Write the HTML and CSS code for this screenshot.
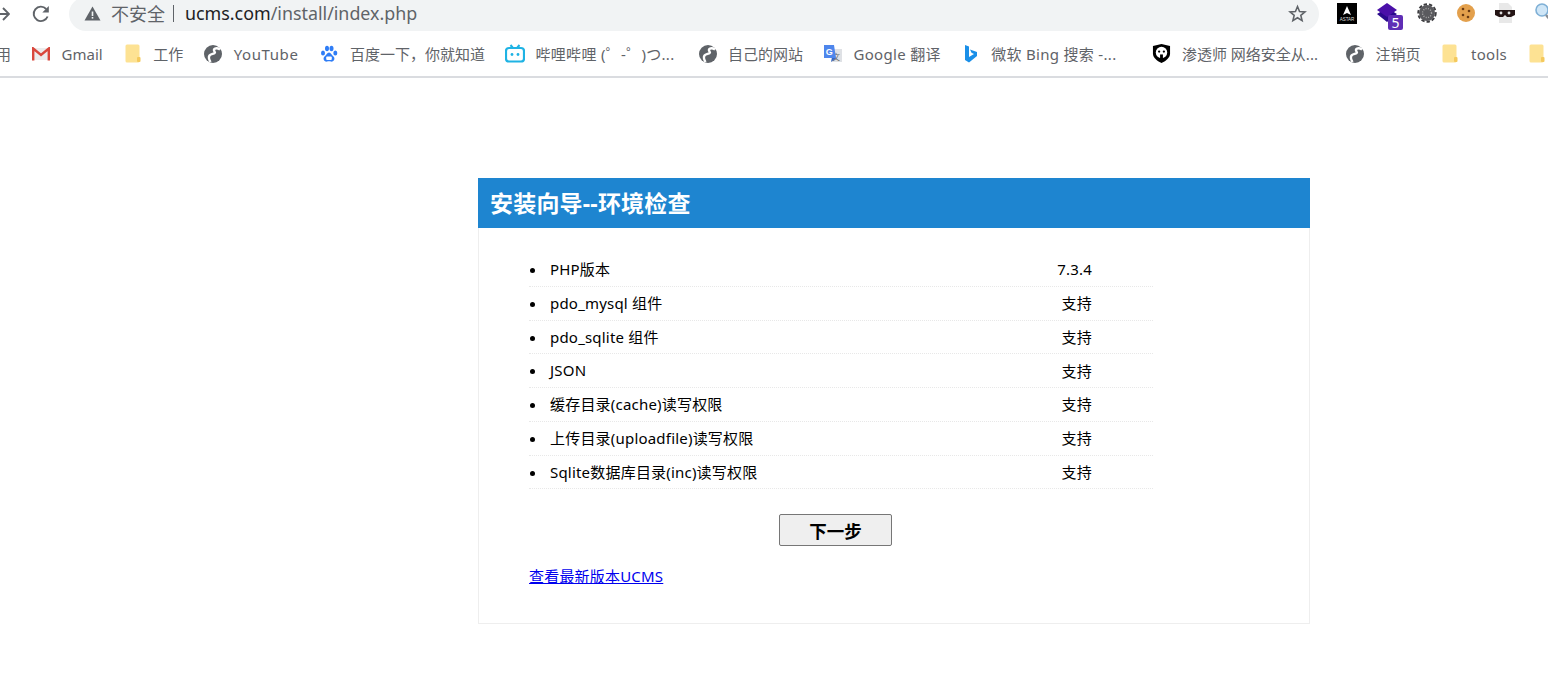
FILE: index.html
```html
<!DOCTYPE html>
<html lang="zh-CN">
<head>
    <meta charset="UTF-8">
    <title>安装向导--环境检查</title>
    <link rel="stylesheet" href="styles.css">
</head>
<body>
    <div class="toolbar">
        <svg class="nav-forward" width="10" height="14" viewBox="0 0 10 14"><path d="M3 1 9 7 3 13M9 7H-2" fill="none" stroke="#5f6368" stroke-width="1.9"/></svg>
        <svg class="nav-reload" width="20" height="20" viewBox="0 0 20 20"><path d="M16.6 12.5A7.2 7.2 0 1 1 15.2 5" fill="none" stroke="#5f6368" stroke-width="1.9"/><path d="M17.8 2V8.5H11.3Z" fill="#5f6368"/></svg>
        <div class="address">
            <svg class="warn" width="17" height="15" viewBox="0 0 17 15"><path d="M8.5 0.5 16.5 14.5H0.5Z" fill="#5f6368"/><rect x="7.7" y="5.5" width="1.6" height="4.5" fill="#f1f3f4"/><rect x="7.7" y="11" width="1.6" height="1.6" fill="#f1f3f4"/></svg>
            <span class="insecure">不安全</span>
            <span class="divider"></span>
            <span class="url"><b>ucms.com</b>/install/index.php</span>
            <svg class="star" width="19" height="19" viewBox="0 0 24 24"><path d="M12 3.2 14.6 9.5 21.4 10 16.2 14.4 17.8 21 12 17.4 6.2 21 7.8 14.4 2.6 10 9.4 9.5Z" fill="none" stroke="#5f6368" stroke-width="2"/></svg>
        </div>
        <div class="extensions">
            <svg width="20" height="21" viewBox="0 0 20 21"><rect width="20" height="21" fill="#000"/><path d="M10 3 14 12 10 10 6 12Z" fill="#fff"/><text x="10" y="17.5" font-size="4.5" font-family="Liberation Sans" fill="#ddd" text-anchor="middle">ASTAR</text></svg>
            <span class="ext-stack">
                <svg width="22" height="22" viewBox="0 0 22 22"><path d="M11 6 21 12 11 20 1 12Z" fill="#2a0a8c"/><path d="M11 1 21 8 11 15 1 8Z" fill="#4a10a8"/></svg>
                <span class="badge">5</span>
            </span>
            <svg width="20" height="20" viewBox="0 0 20 20"><circle cx="10" cy="10" r="8" fill="#5a5a5e"/><circle cx="10" cy="10" r="8.8" fill="none" stroke="#3d3d40" stroke-width="1.8" stroke-dasharray="3.4 2"/><circle cx="10" cy="10" r="4.5" fill="none" stroke="#a8a8a8" stroke-width="1.4" stroke-dasharray="1 1.4"/></svg>
            <svg width="20" height="20" viewBox="0 0 20 20"><circle cx="10" cy="10" r="9" fill="#e3a04c"/><circle cx="7" cy="6" r="1.3" fill="#6b3a12"/><circle cx="13" cy="8" r="1.3" fill="#6b3a12"/><circle cx="7" cy="12" r="1.3" fill="#6b3a12"/><circle cx="12" cy="14" r="1.3" fill="#6b3a12"/></svg>
            <svg width="20" height="20" viewBox="0 0 20 20"><path d="M4 0H13L17 4V20H4Z" fill="#e8e8e8"/><path d="M0 7H20V12L16 14H12L10 12 8 14H4L0 12Z" fill="#241414"/><circle cx="6" cy="10" r="1.4" fill="#ddd"/><circle cx="14" cy="10" r="1.4" fill="#ddd"/></svg>
            <svg width="20" height="22" viewBox="0 0 20 22"><circle cx="8" cy="8" r="6" fill="#cfe6f7" stroke="#7fb0d6" stroke-width="1.6"/><path d="M12 13 18 20" stroke="#8a8f96" stroke-width="2.4"/></svg>
        </div>
    </div>

    <div class="bookmarks">
        <span class="mark mark-cut"><span>用</span></span>
        <span class="mark">
            <span class="fav"><svg width="18" height="14" viewBox="0 0 18 14"><path d="M1 1H17V13H1Z" fill="#ececec"/><path d="M1.2 13.5V1.5L9 8 16.8 1.5V13.5" fill="none" stroke="#d9473c" stroke-width="2.4"/></svg></span>
            <span>Gmail</span>
        </span>
        <span class="mark">
            <span class="fav"><svg width="16" height="19" viewBox="0 0 16 19"><rect x="0.5" y="0.5" width="14" height="18" rx="1.5" fill="#fde293"/><rect x="12" y="13" width="3.5" height="5" rx="1" fill="#f4c95d"/></svg></span>
            <span>工作</span>
        </span>
        <span class="mark mark-youtube">
            <span class="fav"><svg width="18" height="18" viewBox="0 0 18 18"><circle cx="9" cy="9" r="9" fill="#5f6368"/><path d="M16 4.500C12 2 8.500 4 10.500 6.500 12.500 9 7 8.500 5.500 10.500 4.500 12 5 14.500 6.500 17" fill="none" stroke="#fff" stroke-width="2.4"/></svg></span>
            <span>YouTube</span>
        </span>
        <span class="mark">
            <span class="fav"><svg width="18" height="18" viewBox="0 0 18 18"><g fill="#2f7df6"><ellipse cx="3" cy="8" rx="2" ry="2.6"/><ellipse cx="7" cy="3.5" rx="2" ry="2.8"/><ellipse cx="11.5" cy="3.5" rx="2" ry="2.8"/><ellipse cx="15.3" cy="8" rx="2" ry="2.6"/><path d="M9 7.5C11 7.5 11.5 10 13.5 11.5 15.500 13.5 14 17 11 16.6 9.5 16.2 8.5 16.2 7 16.6 4 17 2.5 13.5 4.5 11.5 6.5 10 7 7.5 9 7.5Z"/></g><rect x="6.2" y="11.5" width="5.6" height="3.4" rx="1" fill="#fff"/></svg></span>
            <span>百度一下，你就知道</span>
        </span>
        <span class="mark mark-bili mark-wide">
            <span class="fav"><svg width="20" height="19" viewBox="0 0 20 19"><path d="M5.5 1 8 4M14.5 1 12 4" stroke="#1fb3e4" stroke-width="2" fill="none"/><rect x="1" y="4" width="18" height="13.5" rx="3" fill="#fff" stroke="#1fb3e4" stroke-width="2.2"/><circle cx="7" cy="10.5" r="1.4" fill="#1fb3e4"/><circle cx="13" cy="10.5" r="1.4" fill="#1fb3e4"/></svg></span>
            <span>哔哩哔哩 (゜-゜)つ...</span>
        </span>
        <span class="mark">
            <span class="fav"><svg width="18" height="18" viewBox="0 0 18 18"><circle cx="9" cy="9" r="9" fill="#5f6368"/><path d="M16 4.500C12 2 8.500 4 10.500 6.500 12.500 9 7 8.500 5.500 10.500 4.500 12 5 14.500 6.500 17" fill="none" stroke="#fff" stroke-width="2.4"/></svg></span>
            <span>自己的网站</span>
        </span>
        <span class="mark mark-wide">
            <span class="fav"><svg width="20" height="20" viewBox="0 0 20 20"><rect x="8" y="5" width="11" height="13" fill="#dfe1e5"/><text x="13.5" y="15.5" font-size="8" font-family="Liberation Sans" fill="#666" text-anchor="middle">文</text><path d="M1 1H11L13 14H1Z" fill="#4e86ec"/><path d="M9 14 8 18 13 14Z" fill="#3367c9"/><text x="6.5" y="11" font-size="9" font-weight="700" font-family="Liberation Sans" fill="#fff" text-anchor="middle">G</text></svg></span>
            <span>Google 翻译</span>
        </span>
        <span class="mark mark-wide">
            <span class="fav"><svg width="14" height="20" viewBox="0 0 14 20"><path d="M1 1 5 2.5V13L10 10 7.5 8.8 6 5.5 13 8V12L5 18.5 1 16Z" fill="#1a8fe8"/></svg></span>
            <span>微软 Bing 搜索 -...</span>
        </span>
        <span class="mark mark-far">
            <span class="fav"><svg width="19" height="19" viewBox="0 0 20 20"><path d="M1 2 10 0 19 2V10C19 15 14 18 10 20 6 18 1 15 1 10Z" fill="#000"/><circle cx="10" cy="9" r="6" fill="#fff"/><circle cx="7.5" cy="8" r="1.2" fill="#000"/><circle cx="12.5" cy="8" r="1.2" fill="#000"/><path d="M8.5 11H11.500V17H8.5Z" fill="#000"/></svg></span>
            <span>渗透师 网络安全从...</span>
        </span>
        <span class="mark">
            <span class="fav"><svg width="18" height="18" viewBox="0 0 18 18"><circle cx="9" cy="9" r="9" fill="#5f6368"/><path d="M16 4.500C12 2 8.500 4 10.500 6.500 12.500 9 7 8.500 5.500 10.500 4.500 12 5 14.500 6.500 17" fill="none" stroke="#fff" stroke-width="2.4"/></svg></span>
            <span>注销页</span>
        </span>
        <span class="mark mark-wide">
            <span class="fav"><svg width="16" height="19" viewBox="0 0 16 19"><rect x="0.5" y="0.5" width="14" height="18" rx="1.5" fill="#fde293"/><rect x="12" y="13" width="3.5" height="5" rx="1" fill="#f4c95d"/></svg></span>
            <span>tools</span>
        </span>
        <span class="mark">
            <span class="fav"><svg width="16" height="19" viewBox="0 0 16 19"><rect x="0.5" y="0.5" width="14" height="18" rx="1.5" fill="#fde293"/><rect x="12" y="13" width="3.5" height="5" rx="1" fill="#f4c95d"/></svg></span>
        </span>
    </div>

    <div class="page">
        <div class="panel">
            <h1 class="panel-title">安装向导--环境检查</h1>
            <div class="panel-body">
                <ul class="checks">
                    <li><span class="check-name">PHP版本</span><span class="check-value">7.3.4</span></li>
                    <li><span class="check-name">pdo_mysql 组件</span><span class="check-value">支持</span></li>
                    <li><span class="check-name">pdo_sqlite 组件</span><span class="check-value">支持</span></li>
                    <li><span class="check-name">JSON</span><span class="check-value">支持</span></li>
                    <li><span class="check-name">缓存目录(cache)读写权限</span><span class="check-value">支持</span></li>
                    <li><span class="check-name">上传目录(uploadfile)读写权限</span><span class="check-value">支持</span></li>
                    <li><span class="check-name">Sqlite数据库目录(inc)读写权限</span><span class="check-value">支持</span></li>
                </ul>
                <div class="actions">
                    <button class="next-btn" type="button">下一步</button>
                </div>
                <a class="latest" href="#">查看最新版本UCMS</a>
            </div>
        </div>
    </div>
</body>
</html>
```
FILE: styles.css
```css
body {
    margin: 0;
    background: #fff;
    font-family: "Noto Sans", "Noto Sans CJK SC", sans-serif;
    color: #000;
    overflow: hidden;
}
.toolbar {
    height: 31px;
    display: flex;
    align-items: flex-end;
    overflow: hidden;
}
.nav-forward {
    flex: none;
    margin-bottom: 10px;
}
.nav-reload {
    flex: none;
    margin-left: 21px;
    margin-bottom: 7px;
}
.address {
    flex: none;
    box-sizing: border-box;
    width: 1250px;
    height: 34px;
    margin-left: 18px;
    padding: 0 12px 2px 15px;
    display: flex;
    align-items: center;
    background: #f1f3f4;
    border-radius: 17px;
}
.warn {
    flex: none;
}
.insecure {
    margin-left: 10px;
    font-size: 18px;
    color: #5f6368;
}
.divider {
    width: 1px;
    height: 17px;
    margin: 0 11px 0 8px;
    background: #5f6368;
}
.url {
    font-size: 17.85px;
    color: #5f6368;
}
.url b {
    font-weight: 400;
    color: #202124;
}
.star {
    margin-left: auto;
}
.extensions {
    flex: none;
    margin-left: 18px;
    margin-bottom: 7px;
    display: flex;
    align-items: center;
    gap: 19px;
}
.extensions svg {
    display: block;
    flex: none;
}
.ext-stack {
    position: relative;
    display: block;
}
.badge {
    position: absolute;
    right: -5px;
    bottom: -6px;
    width: 15px;
    height: 15px;
    border-radius: 2px;
    background: #5f2db5;
    color: #fff;
    font-size: 14px;
    line-height: 15px;
    text-align: center;
}
.bookmarks {
    height: 45px;
    display: flex;
    align-items: center;
    gap: 20.5px;
    border-bottom: 2px solid #dadce0;
    overflow: hidden;
    white-space: nowrap;
    font-size: 15px;
    color: #5f6368;
}
.mark {
    flex: none;
    display: flex;
    align-items: center;
    gap: 11px;
}
.fav {
    flex: none;
    width: 19px;
    display: flex;
    justify-content: center;
}
.fav svg {
    flex: none;
    display: block;
}
.mark-cut {
    margin-left: -4px;
}
.mark-wide {
    letter-spacing: 0.3px;
}
.mark-youtube {
    letter-spacing: 0.6px;
    margin-right: 1px;
}
.mark-bili {
    margin-right: 3px;
}
.mark-far {
    margin-left: 15px;
    margin-right: 7px;
}
.page {
    padding: 100px 0 0 478px;
}
.panel {
    box-sizing: border-box;
    width: 832px;
    height: 446px;
    border: 1px solid #eeeeee;
    border-top: 0;
}
.panel-title {
    margin: 0 -1px;
    padding: 0 12px;
    height: 50px;
    line-height: 51px;
    background: #1e85d0;
    color: #fff;
    font-size: 23px;
    font-weight: 700;
    letter-spacing: 0.2px;
}
.panel-body {
    padding: 25px 50px 0;
}
.checks {
    width: 624px;
    margin: 0;
    padding: 0;
    list-style: none;
}
.checks li {
    box-sizing: border-box;
    height: 33.75px;
    padding: 0 0 1px 21px;
    display: flex;
    align-items: center;
    border-bottom: 1px dotted #e8e8e8;
    font-size: 15px;
    letter-spacing: 0.2px;
    position: relative;
}
.checks li::before {
    content: "";
    position: absolute;
    left: 1px;
    top: 15px;
    width: 5px;
    height: 5px;
    border-radius: 50%;
    background: #000;
}
.check-name {
    flex: 1;
}
.check-value {
    width: 76px;
    text-align: right;
    padding-right: 61px;
}
.actions {
    margin-top: 25px;
    padding-left: 250px;
}
.next-btn {
    box-sizing: border-box;
    width: 113px;
    height: 32px;
    padding: 0;
    display: block;
    background: #efefef;
    border: 1px solid #767676;
    border-radius: 2px;
    font-family: inherit;
    font-size: 17.5px;
    font-weight: 700;
    color: #000;
}
.latest {
    display: inline-block;
    margin-top: 19px;
    font-size: 15px;
    letter-spacing: 0.2px;
    color: #0000ee;
}
```
